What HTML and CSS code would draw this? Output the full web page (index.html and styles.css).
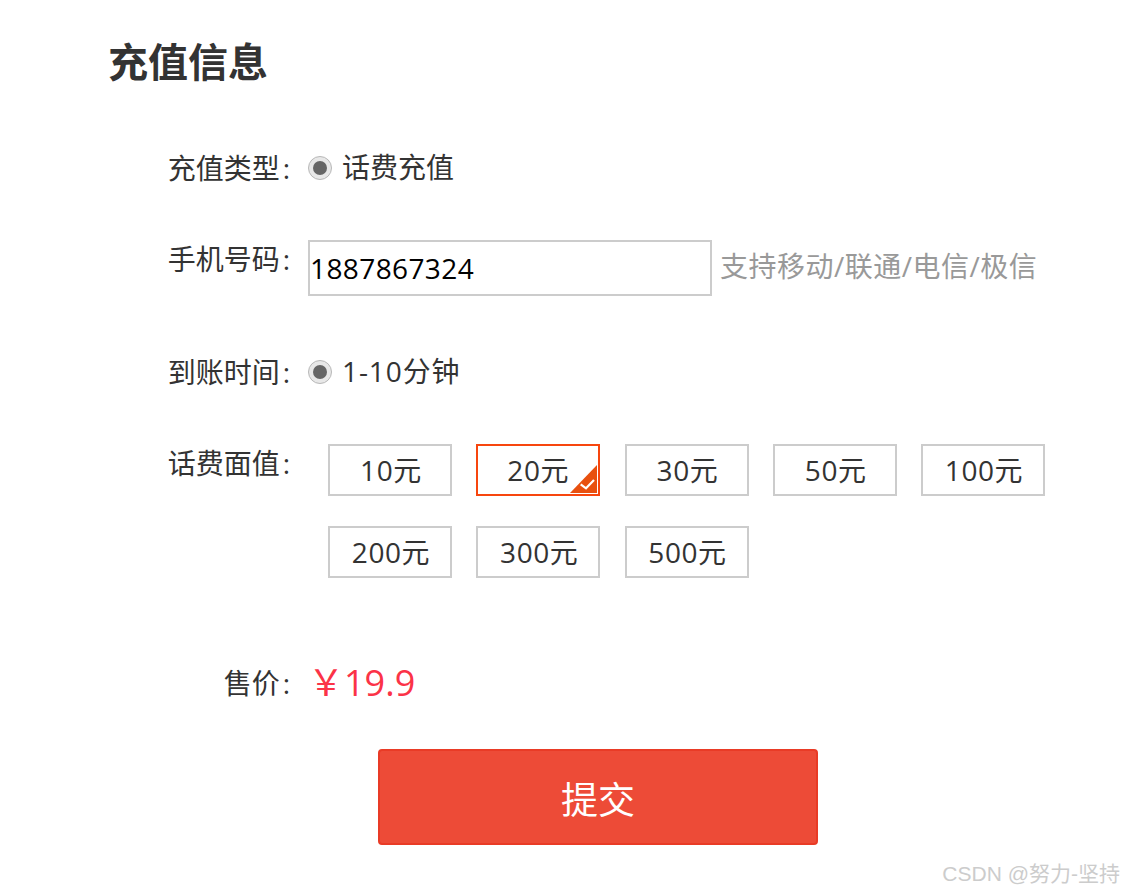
FILE: index.html
```html
<!DOCTYPE html>
<html>
<head>
  <meta charset="UTF-8" />
  <title>充值信息</title>
  <link rel="stylesheet" href="styles.css">
</head>
<body>
  <div class="recharge">
    <h1>充值信息</h1>

    <div class="form-row row-type">
      <span class="form-label">充值类型<i class="colon">:</i></span>
      <span class="radio"></span>
      <span class="radio-text">话费充值</span>
    </div>

    <div class="form-row row-phone">
      <span class="form-label">手机号码<i class="colon">:</i></span>
      <input class="phone-input" type="text" value="1887867324" />
      <span class="hint">支持移动/联通/电信/极信</span>
    </div>

    <div class="form-row row-time">
      <span class="form-label">到账时间<i class="colon">:</i></span>
      <span class="radio"></span>
      <span class="radio-text time-text">1-10分钟</span>
    </div>

    <div class="form-row row-amount">
      <span class="form-label">话费面值<i class="colon">:</i></span>
      <div class="amount-list">
        <div class="amount">10元</div>
        <div class="amount selected">
          <span class="amount-text">20元</span>
          <svg class="check" width="27" height="28" viewBox="0 0 27 28">
            <path d="M0 28 L27 0 V28 Z" fill="#e8500f" />
            <path d="M10.700 19.300 L16 23.300 L24 15" fill="none" stroke="#fff" stroke-width="2.200" />
          </svg>
        </div>
        <div class="amount">30元</div>
        <div class="amount">50元</div>
        <div class="amount">100元</div>
        <div class="amount">200元</div>
        <div class="amount">300元</div>
        <div class="amount">500元</div>
      </div>
    </div>

    <div class="form-row row-price">
      <span class="form-label">售价<i class="colon">:</i></span>
      <span class="price">￥19.9</span>
    </div>

    <button class="submit-btn">提交</button>
  </div>
  <div class="watermark">CSDN @努力-坚持</div>
</body>
</html>
```

FILE: styles.css
```css
body {
  margin: 0;
  background: #fff;
  color: #333;
  font-family: "Open Sans", "Noto Sans CJK SC", sans-serif;
  height: 894px;
  overflow: hidden;
}
.recharge {
  padding: 38px 0 0 108px;
}
.recharge h1 {
  margin: 0 0 60px 0;
  font-size: 40px;
  line-height: 48px;
  font-weight: 700;
  color: #333;
}
.form-row {
  display: flex;
  align-items: flex-start;
  font-size: 28px;
}
.form-label {
  width: 184px;
  text-align: right;
  line-height: 44px;
  flex: 0 0 auto;
  color: #333;
  margin-right: 16px;
}
.colon {
  font-style: normal;
  margin: 0 2px 0 3px;
}
.radio {
  width: 24px;
  height: 24px;
  margin-top: 10px;
  border: 1px solid #b8b8b8;
  border-radius: 50%;
  background: #e8e8e8;
  box-sizing: border-box;
  display: flex;
  align-items: center;
  justify-content: center;
}
.radio::after {
  content: "";
  width: 14px;
  height: 14px;
  border-radius: 50%;
  background: #666;
}
.radio-text {
  margin-left: 10px;
  line-height: 42px;
}
.time-text {
  letter-spacing: 0.9px;
}
.row-phone {
  margin-top: 50px;
}
.row-phone .form-label {
  line-height: 39px;
}
.phone-input {
  width: 404px;
  height: 56px;
  box-sizing: border-box;
  border: 2px solid #ccc;
  padding: 0;
  font-size: 28px;
  letter-spacing: 0.4px;
  font-family: "Open Sans", "Noto Sans CJK SC", sans-serif;
  color: #000;
  outline: none;
}
.hint {
  margin-left: 8px;
  line-height: 52px;
  letter-spacing: 0.5px;
  color: #999;
}
.row-time {
  margin-top: 54px;
}
.row-amount {
  margin-top: 47px;
}
.row-amount .form-label {
  margin-right: 36px;
}
.amount-list {
  display: grid;
  grid-template-columns: repeat(5, 124px);
  gap: 30px 24.25px;
  margin-top: 3px;
}
.amount {
  position: relative;
  height: 52px;
  box-sizing: border-box;
  border: 2px solid #ccc;
  padding-left: 2px;
  line-height: 48px;
  letter-spacing: 0.6px;
  text-align: center;
}
.amount.selected {
  border-color: #f7460e;
}
.amount-text {
  margin-left: -2px;
}
.check {
  position: absolute;
  right: 1px;
  bottom: 1px;
}
.row-price {
  margin-top: 83px;
}
.price {
  color: #fb3347;
  font-size: 36px;
  line-height: 44px;
}
.submit-btn {
  display: block;
  width: 440px;
  height: 96px;
  margin: 44px 0 0 270px;
  padding: 1px 0 0 0;
  background: #ed4b37;
  border: 2px solid #e93b26;
  border-radius: 4px;
  color: #fff;
  font-size: 37px;
  font-family: "Open Sans", "Noto Sans CJK SC", sans-serif;
}
.watermark {
  position: absolute;
  right: 3px;
  top: 857px;
  font-size: 21px;
  color: #ccc;
  font-family: "Liberation Sans", "Noto Sans CJK SC", sans-serif;
}
```
